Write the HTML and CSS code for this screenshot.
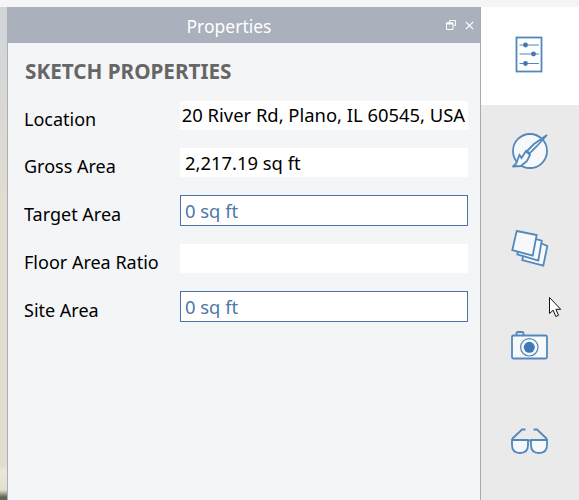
FILE: index.html
```html
<!DOCTYPE html>
<html>
<head>
  <title>Properties</title>
  <link rel="stylesheet" href="styles.css">
</head>
<body>

  <div class="window">
    <div class="panel">
      <div class="panel-header">
        <span class="panel-title">Properties</span>
        <svg class="panel-btn" width="10" height="10" viewBox="0 0 10 10">
          <path d="M3.5 2.5V.5h6v5h-2M.5 3h6.5v6.5H.5z" fill="none" stroke="#fff"/>
          <path d="M.5 3.5h6.5" stroke="#fff" stroke-width="2"/>
        </svg>
        <svg class="panel-btn close-btn" width="9" height="9" viewBox="0 0 9 9">
          <path d="M.8.8l7.4 7.4M8.2.8L.8 8.2" stroke="#fff" stroke-width="1.2"/>
        </svg>
      </div>

      <div class="panel-body">
        <h2>SKETCH PROPERTIES</h2>

        <div class="row">
          <label>Location</label>
          <div class="field scrolled"><span>20 River Rd, Plano, IL 60545, USA</span></div>
        </div>
        <div class="row">
          <label>Gross Area</label>
          <div class="field">2,217.19 sq ft</div>
        </div>
        <div class="row">
          <label>Target Area</label>
          <div class="field editable">0 sq ft</div>
        </div>
        <div class="row">
          <label>Floor Area Ratio</label>
          <div class="field"></div>
        </div>
        <div class="row">
          <label>Site Area</label>
          <div class="field editable">0 sq ft</div>
        </div>
      </div>
    </div>

    <div class="sidebar">
      <div class="tab active">
        <svg width="40" height="40" viewBox="0 0 40 40">
          <rect class="line" x="7.5" y="3.5" width="25" height="34"/>
          <path class="line thin" d="M10.5 11H30M10.5 20H30M10.5 29.5H30"/>
          <circle class="dot" cx="16.5" cy="11" r="2.4"/>
          <circle class="dot" cx="24.5" cy="20" r="2.4"/>
          <circle class="dot" cx="16.5" cy="29.5" r="2.4"/>
        </svg>
      </div>
      <div class="tab">
        <svg width="40" height="40" viewBox="0 0 40 40">
          <circle class="line filled" cx="21" cy="20" r="17"/>
          <path class="line filled" d="M38 4L25 13L18 20L20.5 22.5L28 15Z"/>
          <path class="line filled" d="M17 20L21 24L18 30C15.5 32 13.5 33.5 12 35L3.5 35.5C6.5 34 8 31.5 8.5 29L10.5 24L12.5 27Z"/>
        </svg>
      </div>
      <div class="tab">
        <svg width="40" height="40" viewBox="0 0 40 40">
          <path class="line filled" d="M18 9L38.3 18L34.3 37.7L13.3 32Z"/>
          <path class="line filled" d="M12 7L32.7 12.7L29.3 32.7L8.3 26.3Z"/>
          <path class="line filled" d="M7.7 3L27.7 7L23.7 27.7L3.3 22Z"/>
        </svg>
      </div>
      <div class="tab">
        <svg width="40" height="40" viewBox="0 0 40 40">
          <path class="line" d="M7.5 10V8.5Q7.5 7 9 7H13Q14.5 7 14.5 8.5V10"/>
          <rect class="line filled" x="3" y="10.5" width="35" height="23" rx="1.5"/>
          <circle class="line thin" cx="20.3" cy="22.3" r="8.7"/>
          <circle class="dot" cx="20.3" cy="22.3" r="5.5"/>
        </svg>
      </div>
      <div class="tab">
        <svg width="40" height="40" viewBox="0 0 40 40">
          <path class="line" d="M3 17L13 7.5H16.5M38 17L28 7.5H24.5"/>
          <path class="line filled" d="M3 18H19V23C19 28 16 31 11 31C6 31 3 28 3 23Z"/>
          <path class="line filled" d="M22 18H38V23C38 28 35 31 30 31C25 31 22 28 22 23Z"/>
          <path class="line" d="M19 18.5H22"/>
        </svg>
      </div>
    </div>
  </div>

  <svg class="cursor" width="14" height="22" viewBox="0 0 14 22">
    <path d="M.5.5V16.5L4.2 13.2L6.8 19.5L9.5 18.3L6.9 12.3H11.7Z" fill="#fff" stroke="#111"/>
  </svg>

</body>
</html>
```

FILE: styles.css
```css
* {
  box-sizing: border-box;
}

html,
body {
  margin: 0;
  height: 500px;
  overflow: hidden;
}

body {
  font-family: "Noto Sans", Arial, sans-serif;
  font-size: 18px;
  color: #000;
  padding-top: 7px;
  padding-left: 7px;
  background: linear-gradient(to bottom, #f5f5f5 7px, #d0d5d9 7px, #e2dbd0 200px, #e2dbd0 465px, #ebe7da 470px, #e3e0d0 490px, #5f6757 497px);
}

.window {
  display: flex;
  height: 493px;
}

.panel {
  width: 473px;
  display: flex;
  flex-direction: column;
  border-left: 1px solid #a9afb9;
  background-color: #f4f5f7;
}

.panel-header {
  display: flex;
  align-items: center;
  height: 36px;
  padding-right: 6px;
  background-color: #aab1bc;
}

.panel-title {
  flex: 1;
  padding: 2px 0 0 4px;
  text-align: center;
  color: #fff;
  font-size: 17.5px;
}

.panel-btn {
  display: block;
}

.close-btn {
  margin-left: 9px;
}

.panel-body {
  padding: 16px 12px 0 16px;
}

h2 {
  margin: 0 0 18px 0;
  padding-left: 1px;
  height: 24px;
  line-height: 24px;
  font-size: 20.7px;
  font-weight: bold;
  color: #666;
}

.row {
  display: flex;
  align-items: center;
  margin-bottom: 18px;
}

label {
  width: 156px;
  line-height: 21px;
  padding-top: 8px;
}

.field {
  width: 288px;
  height: 29px;
  line-height: 29px;
  padding-left: 5px;
  background-color: #fff;
  font-size: 18.4px;
  white-space: nowrap;
  overflow: hidden;
}

.scrolled {
  display: flex;
  justify-content: flex-end;
  padding: 0 3px 0 0;
  line-height: 28px;
}

.editable {
  height: 31px;
  padding-left: 4px;
  border: 1px solid #4a72a5;
  color: #4a78ab;
}

.sidebar {
  flex: 1;
  border-left: 1px solid #a9a9a9;
  background-color: #eaeaea;
}

.tab {
  height: 97px;
  padding: 26px 0 0 28px;
}

.tab:first-child {
  height: 98px;
  padding-top: 27px;
}

.tab svg {
  display: block;
}

.active {
  background-color: #fff;
}

.line {
  fill: none;
  stroke: #5388bd;
  stroke-width: 1.8;
}

.thin {
  stroke-width: 1.2;
}

.filled {
  fill: #f7f8f9;
}

.dot {
  fill: #3f78b3;
}

.cursor {
  position: absolute;
  left: 549px;
  top: 297px;
}
```
